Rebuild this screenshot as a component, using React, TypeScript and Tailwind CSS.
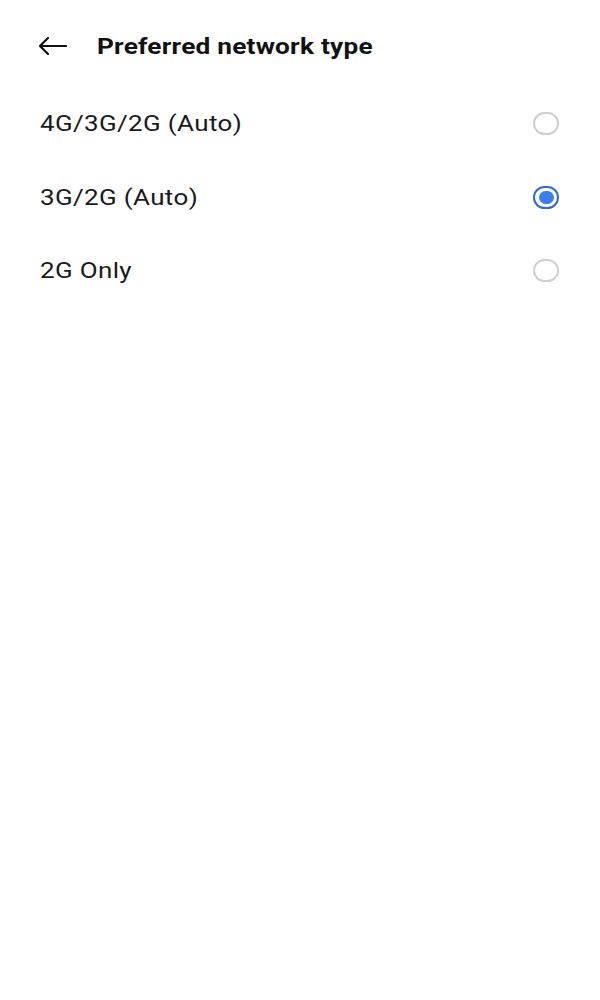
import { useState } from 'react';

const options = ['4G/3G/2G (Auto)', '3G/2G (Auto)', '2G Only'];

export default function App() {
  const [selected, setSelected] = useState(1);

  return (
    <div className="w-[600px] h-[1000px] bg-white text-[#111] font-['Roboto',sans-serif]">
      {/* Header */}
      <div className="flex items-center h-[92px] pl-[38px]">
        <svg width="29" height="18" viewBox="0 0 29 18" fill="none" className="shrink-0">
          <path d="M28 9H2M10 1L2 9l8 8" stroke="#111" strokeWidth="2.2" strokeLinecap="round" strokeLinejoin="round" />
        </svg>
        <h1 className="ml-[30px] text-[22px] font-bold tracking-[0.2px] origin-left scale-x-[1.19]">
          Preferred network type
        </h1>
      </div>

      {/* Options */}
      <div className="flex flex-col -mt-[5px]">
        {options.map((label, i) => (
          <button
            key={label}
            onClick={() => setSelected(i)}
            className="flex items-center justify-between h-[73.5px] pl-[40px] pr-[41px] text-left"
          >
            <span className="text-[22px] tracking-[0.3px] text-[#1a1a1a] origin-left scale-x-[1.18]">{label}</span>
            {selected === i ? (
              <span className="w-[26px] h-[23px] rounded-full border-[2.5px] border-[#2f69d6] flex items-center justify-center">
                <span className="w-[15px] h-[13px] rounded-full bg-[#3a7ef0]" />
              </span>
            ) : (
              <span className="w-[26px] h-[23px] rounded-full border-[2px] border-[#cfcfcf]" />
            )}
          </button>
        ))}
      </div>
    </div>
  );
}
